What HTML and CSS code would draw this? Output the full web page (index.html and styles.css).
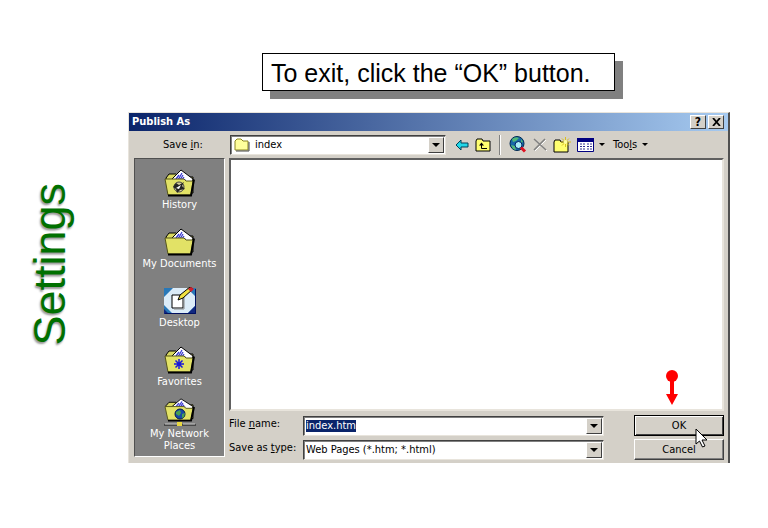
FILE: index.html
```html
<!DOCTYPE html>
<html lang="en">
<head>
    <meta charset="UTF-8">
    <meta name="viewport" content="width=device-width, initial-scale=1.0">
    <title>Settings - Publish As</title>

    <link rel="stylesheet" href="styles.css">
</head>
<body>

    <!-- Shapes shared by the folder icons -->
    <svg class="defs" aria-hidden="true">
        <symbol id="folder" viewBox="0 0 32 28">
            <path d="M2 9 5 5h7l3 3h14v16H5z" fill="#d8d860" stroke="#000"/>
            <path d="M7 11 17 1l12 9-3 9H10z" fill="#fff" stroke="#000"/>
            <path d="m12 10 3-4m-1 5 4-7m-2 7 3-5m-1 5 2-3m0 4 1-2" stroke="#3a3ad0" stroke-width="1.3"/>
            <path d="M1 10h19l2 2h7l-2 14H4z" fill="#e2e266" stroke="#55551a"/>
            <path d="M4 26.500h23l3-16" fill="none" stroke="#000" stroke-width="2"/>
        </symbol>
    </svg>

    <div class="slide">
        <aside class="side">
            <h1>Settings</h1>
        </aside>

        <main>
            <p class="note">To exit, click the “OK” button.</p>

            <form class="dialog">
                <header class="title-bar">
                    <h2>Publish As</h2>
                    <button type="button" class="caption-btn" aria-label="Help">?</button>
                    <button type="button" class="caption-btn" aria-label="Close">
                        <svg width="9" height="8" viewBox="0 0 9 8"><path d="m1 0 7 8M8 0 1 8" stroke="#000" stroke-width="1.800"/></svg>
                    </button>
                </header>

                <!-- Toolbar -->
                <div class="toolbar">
                    <label class="save-in" for="save-in">Save <u>i</u>n:</label>
                    <div class="combo look-in">
                        <svg class="small-folder" width="16" height="14" viewBox="0 0 16 14"><path d="M1 12V3l2-2h4l2 2h5v9z" fill="#ffff9c" stroke="#8a8420"/><path d="M2 13h13V4" fill="none" stroke="#444"/></svg>
                        <select id="save-in"><option>index</option></select>
                        <span class="drop"></span>
                    </div>
                    <div class="tools">
                        <button type="button" aria-label="Back">
                            <svg width="14" height="12" viewBox="0 0 14 12"><path d="M1 6 6 1v3h7v4H6v3z" fill="#20d8e8" stroke="#004058"/></svg>
                        </button>
                        <button type="button" aria-label="Up one level">
                            <svg width="16" height="14" viewBox="0 0 16 14"><path d="M1 13V3l1-2h5l1 2h7v10z" fill="#ffff70" stroke="#000"/><path d="M6.500 6v4.500H12" fill="none" stroke="#000"/><path d="M4 7.500 6.500 4.500 9 7.500z" fill="#000"/></svg>
                        </button>
                        <span class="sep"></span>
                        <button type="button" aria-label="Search the Web">
                            <svg width="18" height="17" viewBox="0 0 18 17"><circle cx="8" cy="7.500" r="7" fill="#1668a8" stroke="#002850"/><path d="M3 3q4-3 7-1L7 5 4 6zM2 9l4 1 1 4-3-1zM12 3l2 3-2 1z" fill="#50b878"/><circle cx="9.500" cy="9" r="3.500" fill="#a8ecf8" stroke="#002060"/><path d="m12 11.500 4 4" stroke="#e01020" stroke-width="3"/></svg>
                        </button>
                        <button type="button" aria-label="Delete">
                            <svg width="14" height="13" viewBox="0 0 14 13"><path d="m1 1 12 11M12 1 1 12" stroke="#fff" transform="translate(1 1)"/><path d="m1 1 12 11M12 1 1 12" stroke="#808080" stroke-width="1.500"/></svg>
                        </button>
                        <button type="button" aria-label="Create new folder">
                            <svg width="18" height="16" viewBox="0 0 18 16"><path d="M1 15V5l1-2h5l1 2h7v10z" fill="#ffff70" stroke="#000"/><path d="M12.500 0v10M8 5h10M9 1.500l7 7m0-7-7 7" stroke="#d8c020"/><circle cx="12.500" cy="5" r="2" fill="#ffffa0"/></svg>
                        </button>
                        <button type="button" class="menu-btn" aria-label="Views">
                            <svg width="17" height="14" viewBox="0 0 17 14"><path d="M.5.500h16v13H.5z" fill="#fff" stroke="#000080"/><path d="M0 0h17v4H0z" fill="#000080"/><path d="M3 6h2m1 0h2m2 0h2m1 0h2M3 8.500h2m1 0h2m2 0h2m1 0h2M3 11h2m1 0h2m2 0h2m1 0h2" stroke="#303090"/></svg>
                            <span class="caret"></span>
                        </button>
                        <button type="button" class="menu-btn"><span>Too<u>l</u>s</span> <span class="caret"></span></button>
                    </div>
                </div>

                <div class="content">
                    <!-- Places bar -->
                    <nav class="places">
                        <a href="#">
                            <svg width="32" height="28" viewBox="0 0 32 28"><use href="#folder"/><circle cx="15" cy="18" r="5" fill="#d8d0a0" stroke="#444"/><path d="m9 18 3-4 3 2 5-3-2 4 3 3-5 1-3 3-1-4z" fill="#222"/><path d="m12 19 5-3-2 4z" fill="#fff"/></svg>
                            <span>History</span>
                        </a>
                        <a href="#">
                            <svg width="32" height="28" viewBox="0 0 32 28"><use href="#folder"/></svg>
                            <span>My Documents</span>
                        </a>
                        <a href="#">
                            <svg width="32" height="28" viewBox="0 0 32 28"><path d="M0 1h32v26H0z" fill="#dcecf8"/><path d="M0 1h9L0 10zM32 1v9l-9-9zM0 27v-9l9 9zM32 27h-9l9-9z" fill="#2878b8"/><path d="M0 27v-5l5 5zM32 27v-9l-9 9z" fill="#102880"/><path d="M1 26.500h30.500V2" fill="none" stroke="#001060"/><path d="M8 8h11v13H8z" fill="#fff" stroke="#000"/><path d="M10 22h10V10" fill="none" stroke="#888"/><path d="m14 13 2-5L26 0l3 2-10 9z" fill="#f0e040" stroke="#000"/><path d="m24 2 3-2 3 2-3 3z" fill="#d02030"/></svg>
                            <span>Desktop</span>
                        </a>
                        <a href="#">
                            <svg width="32" height="28" viewBox="0 0 32 28"><use href="#folder"/><path d="M15 13v10M10 18h10M11.500 14.500l7 7m0-7-7 7" stroke="#1818d8" stroke-width="1.500"/></svg>
                            <span>Favorites</span>
                        </a>
                        <a href="#">
                            <svg width="32" height="28" viewBox="0 0 32 28"><svg width="32" height="24" viewBox="0 0 32 28" preserveAspectRatio="none"><use href="#folder"/></svg><path d="M0 27h32" stroke="#111"/><path d="M1 26h12m6 0h12" stroke="#c8c8c8"/><path d="M13 24h5v4h-5z" fill="#e8d840"/><circle cx="16" cy="16" r="5" fill="#1848a8" stroke="#001850"/><path d="m12 14 4-2 1 3-2 3-3-2zM18 16l3-1-1 4-2 1z" fill="#48a050"/></svg>
                            <span>My Network Places</span>
                        </a>
                    </nav>

                    <div class="right">
                        <div class="file-list">
                            <svg class="pointer-arrow" width="14" height="36" viewBox="0 0 14 36"><circle cx="7" cy="6" r="6" fill="#f00"/><path d="M5 6h4v18h4L7 35 1 24h4z" fill="#f00"/></svg>
                        </div>

                        <div class="fields">
                            <label for="file-name">File <u>n</u>ame:</label>
                            <div class="combo">
                                <input type="text" id="file-name" value="index.htm">
                                <span class="drop"></span>
                            </div>
                            <button type="submit" class="btn default">OK
                                <svg class="cursor" width="13" height="20" viewBox="0 0 13 20"><path d="M1 1v15l3.500-3 3 6 2.500-1-3-6h5z" fill="#fff" stroke="#000"/></svg>
                            </button>

                            <label for="file-type">Save as <u>t</u>ype:</label>
                            <div class="combo">
                                <select id="file-type"><option>Web Pages (*.htm; *.html)</option></select>
                                <span class="drop"></span>
                            </div>
                            <button type="button" class="btn">Cancel</button>
                        </div>
                    </div>
                </div>
            </form>
        </main>
    </div>

</body>
</html>
```
FILE: styles.css
```css
* {
    margin: 0;
    padding: 0;
    box-sizing: border-box;
}

body {
    background-color: #fff;
    color: #000;
    font-family: "Liberation Sans", Arial, sans-serif;
}

svg {
    display: block;
    flex: none;
}

.defs {
    position: absolute;
    width: 0;
    height: 0;
}

.slide {
    display: flex;
    min-height: 100vh;
}

/* Vertical heading */
.side {
    width: 128px;
    flex: none;
    display: flex;
    align-items: center;
    padding-left: 24px;
}

.side h1 {
    font-size: 45px;
    line-height: 52px;
    font-weight: normal;
    color: #007000;
    writing-mode: vertical-rl;
    transform: rotate(180deg);
    text-shadow: -2px -1px 2px #999;
}

main {
    flex: 1;
    padding: 53px 38px 48px 0;
}

.note {
    width: fit-content;
    margin: 0 0 21px 134px;
    padding: 5px 23px 3px 8px;
    border: 1px solid #000;
    background: #fff;
    box-shadow: 8px 8px 0 #808080;
    font-size: 25px;
    line-height: 28px;
}

/* Dialog window */
.dialog {
    background: #d4d0c8;
    border-top: 1px solid #e8e4dc;
    border-left: 1px solid #e8e4dc;
    border-right: 2px solid #505050;
    font-family: "DejaVu Sans Condensed", "DejaVu Sans", sans-serif;
    font-size: 11px;
    line-height: 12px;
}

.dialog button,
.dialog input,
.dialog select {
    font: inherit;
    color: inherit;
}

.title-bar {
    display: flex;
    align-items: center;
    gap: 2px;
    height: 18px;
    padding: 0 4px 0 3px;
    background: linear-gradient(to right, #0a246a, #a6caf0);
    color: #fff;
}

.title-bar h2 {
    flex: 1;
    font-size: 11px;
    font-weight: bold;
}

.title-bar .caption-btn {
    display: flex;
    align-items: center;
    justify-content: center;
    width: 16px;
    height: 14px;
    background: #d4d0c8;
    border: 1px solid;
    border-color: #fff #404040 #404040 #fff;
    color: #000;
    font-size: 12px;
    font-weight: bold;
}

/* Toolbar */
.toolbar {
    display: flex;
    align-items: center;
    height: 27px;
}

.save-in {
    width: 101px;
    padding-left: 34px;
}

.combo {
    display: flex;
    align-items: center;
    position: relative;
    height: 20px;
    padding: 1px 1px 1px 2px;
    background: #fff;
    border: 1px solid;
    border-color: #404040 #e8e4dc #e8e4dc #404040;
    box-shadow: inset 1px 1px 0 #808080;
}

.combo select,
.combo input {
    appearance: none;
    border: none;
    outline: none;
    background: transparent;
}

.combo select {
    flex: 1;
    min-width: 0;
}

.combo input {
    field-sizing: content;
    background: #0a246a;
    color: #fff;
}

.drop {
    display: flex;
    align-items: center;
    justify-content: center;
    width: 16px;
    height: 16px;
    margin-left: auto;
    background: #d4d0c8;
    border: 1px solid;
    border-color: #fff #404040 #404040 #fff;
    pointer-events: none;
}

.drop::after {
    content: "";
    border: 4px solid transparent;
    border-top-color: #000;
    border-bottom: none;
}

.look-in {
    width: 216px;
    gap: 5px;
}

.small-folder {
    margin-left: 1px;
}

.tools {
    display: flex;
    align-items: center;
    gap: 6px;
    padding-left: 9px;
}

.tools button {
    display: flex;
    align-items: center;
    background: none;
    border: none;
}

.tools .menu-btn {
    gap: 5px;
    margin-right: 2px;
}

.sep {
    width: 2px;
    height: 20px;
    margin: 0 2px;
    background: #808080;
    border-right: 1px solid #fff;
}

.caret {
    border: 3px solid transparent;
    border-top-color: #000;
    border-bottom: none;
}

.content {
    display: flex;
    gap: 4px;
    padding: 0 4px 3px 5px;
}

/* Places bar */
.places {
    width: 91px;
    flex: none;
    display: flex;
    flex-direction: column;
    gap: 17px;
    padding-top: 10px;
    margin-bottom: 3px;
    background: #808080;
    border: 1px solid;
    border-color: #505050 #fff #fff #505050;
}

.places a {
    display: flex;
    flex-direction: column;
    align-items: center;
    gap: 2px;
    color: #fff;
    text-align: center;
    text-decoration: none;
}

.places a:last-child {
    margin-top: -7px;
}

.right {
    flex: 1;
    min-width: 0;
}

.file-list {
    position: relative;
    height: 253px;
    background: #fff;
    border: 2px solid;
    border-color: #606060 #e8e4dc #e8e4dc #606060;
}

/* Red marker above the OK button */
.pointer-arrow {
    position: absolute;
    right: 43px;
    bottom: 3px;
}

.fields {
    display: grid;
    grid-template-columns: 74px 1fr 90px;
    align-items: center;
    row-gap: 3px;
    padding-top: 4px;
}

.fields label {
    padding-bottom: 3px;
}

.fields .combo {
    margin-right: 30px;
}

.btn {
    position: relative;
    height: 21px;
    background: #d4d0c8;
    border: 1px solid;
    border-color: #fff #404040 #404040 #fff;
    box-shadow: inset -1px -1px 0 #808080;
}

.btn.default {
    border: 1px solid #000;
    box-shadow: inset 1px 1px 0 #fff, inset -1px -1px 0 #404040;
}

.cursor {
    position: absolute;
    left: 60px;
    top: 12px;
    z-index: 1;
}
```
